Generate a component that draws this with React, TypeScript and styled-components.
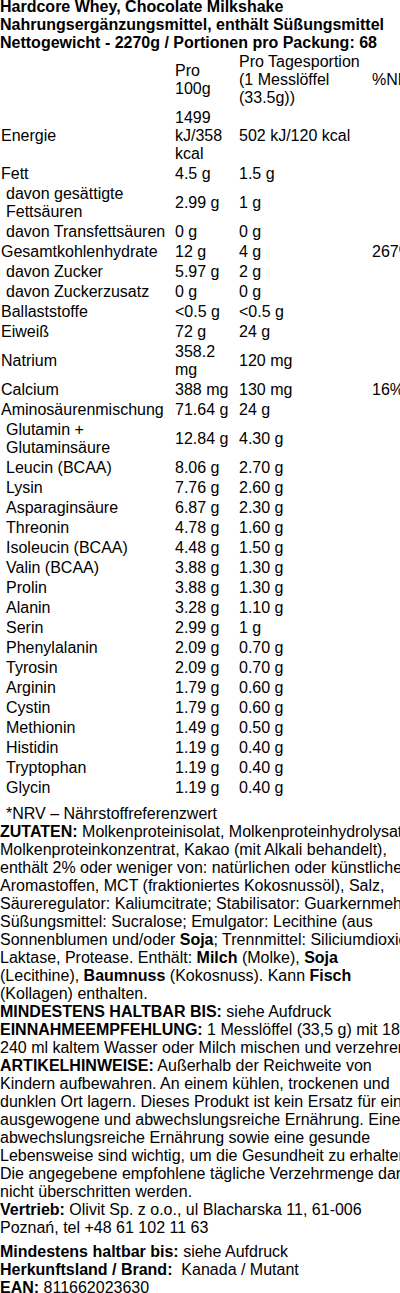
import styled, { createGlobalStyle } from "styled-components";

const Global = createGlobalStyle`
  html, body {
    margin: 0;
    padding: 0;
    overflow: hidden;
    background: #fff;
  }
  body {
    font-family: "Liberation Sans", Arial, sans-serif;
    font-size: 16px;
    color: #000;
  }
`;

const Page = styled.div`
  width: 420px;
  margin-top: -2px;
`;

const Heading = styled.div`
  font-weight: bold;
`;

const Table = styled.table`
  width: 100%;
  border-collapse: collapse;
  table-layout: fixed;
`;

const Cell = styled.td<{ $indent?: boolean }>`
  padding: 1px;
  padding-left: ${(p) => (p.$indent ? "6px" : "1px")};
  vertical-align: middle;
  text-align: left;
`;

const Note = styled.div`
  margin-top: 7px;
  padding-left: 6px;
`;

const Text = styled.div``;

const Footer = styled.div`
  margin-top: 6px;
`;

interface Row {
  name: string;
  per100: string;
  portion: string;
  nrv?: string;
  sub?: boolean;
}

const rows: Row[] = [
  { name: "Energie", per100: "1499 kJ/358 kcal", portion: "502 kJ/120 kcal" },
  { name: "Fett", per100: "4.5 g", portion: "1.5 g" },
  { name: "davon gesättigte Fettsäuren", per100: "2.99 g", portion: "1 g", sub: true },
  { name: "davon Transfettsäuren", per100: "0 g", portion: "0 g", sub: true },
  { name: "Gesamtkohlenhydrate", per100: "12 g", portion: "4 g", nrv: "267%" },
  { name: "davon Zucker", per100: "5.97 g", portion: "2 g", sub: true },
  { name: "davon Zuckerzusatz", per100: "0 g", portion: "0 g", sub: true },
  { name: "Ballaststoffe", per100: "<0.5 g", portion: "<0.5 g" },
  { name: "Eiweiß", per100: "72 g", portion: "24 g" },
  { name: "Natrium", per100: "358.2 mg", portion: "120 mg" },
  { name: "Calcium", per100: "388 mg", portion: "130 mg", nrv: "16%" },
  { name: "Aminosäurenmischung", per100: "71.64 g", portion: "24 g" },
  { name: "Glutamin + Glutaminsäure", per100: "12.84 g", portion: "4.30 g", sub: true },
  { name: "Leucin (BCAA)", per100: "8.06 g", portion: "2.70 g", sub: true },
  { name: "Lysin", per100: "7.76 g", portion: "2.60 g", sub: true },
  { name: "Asparaginsäure", per100: "6.87 g", portion: "2.30 g", sub: true },
  { name: "Threonin", per100: "4.78 g", portion: "1.60 g", sub: true },
  { name: "Isoleucin (BCAA)", per100: "4.48 g", portion: "1.50 g", sub: true },
  { name: "Valin (BCAA)", per100: "3.88 g", portion: "1.30 g", sub: true },
  { name: "Prolin", per100: "3.88 g", portion: "1.30 g", sub: true },
  { name: "Alanin", per100: "3.28 g", portion: "1.10 g", sub: true },
  { name: "Serin", per100: "2.99 g", portion: "1 g", sub: true },
  { name: "Phenylalanin", per100: "2.09 g", portion: "0.70 g", sub: true },
  { name: "Tyrosin", per100: "2.09 g", portion: "0.70 g", sub: true },
  { name: "Arginin", per100: "1.79 g", portion: "0.60 g", sub: true },
  { name: "Cystin", per100: "1.79 g", portion: "0.60 g", sub: true },
  { name: "Methionin", per100: "1.49 g", portion: "0.50 g", sub: true },
  { name: "Histidin", per100: "1.19 g", portion: "0.40 g", sub: true },
  { name: "Tryptophan", per100: "1.19 g", portion: "0.40 g", sub: true },
  { name: "Glycin", per100: "1.19 g", portion: "0.40 g", sub: true },
];

export default function App() {
  return (
    <Page>
      <Global />
      <Heading>
        Hardcore Whey, Chocolate Milkshake
        <br />
        Nahrungsergänzungsmittel, enthält Süßungsmittel
        <br />
        Nettogewicht - 2270g / Portionen pro Packung: 68
      </Heading>
      <Table>
        <colgroup>
          <col style={{ width: 174 }} />
          <col style={{ width: 64 }} />
          <col style={{ width: 133 }} />
          <col />
        </colgroup>
        <tbody>
          <tr>
            <Cell></Cell>
            <Cell>Pro 100g</Cell>
            <Cell>Pro Tagesportion (1 Messlöffel (33.5g))</Cell>
            <Cell>%NRV*</Cell>
          </tr>
          {rows.map((r) => (
            <tr key={r.name}>
              <Cell $indent={r.sub}>{r.name}</Cell>
              <Cell>{r.per100}</Cell>
              <Cell>{r.portion}</Cell>
              <Cell>{r.nrv}</Cell>
            </tr>
          ))}
        </tbody>
      </Table>
      <Note>*NRV – Nährstoffreferenzwert</Note>
      <Text>
        <b>ZUTATEN:</b> Molkenproteinisolat, Molkenproteinhydrolysat, Molkenproteinkonzentrat, Kakao (mit
        Alkali behandelt), enthält 2% oder weniger von: natürlichen oder künstlichen Aromastoffen, MCT
        (fraktioniertes Kokosnussöl), Salz, Säureregulator: Kaliumcitrate; Stabilisator: Guarkernmehl,
        Süßungsmittel: Sucralose; Emulgator: Lecithine (aus Sonnenblumen und/oder <b>Soja</b>; Trennmittel:
        Siliciumdioxid, Laktase, Protease. Enthält: <b>Milch</b> (Molke), <b>Soja</b> (Lecithine),{" "}
        <b>Baumnuss</b> (Kokosnuss). Kann <b>Fisch</b> (Kollagen) enthalten.
        <br />
        <b>MINDESTENS HALTBAR BIS:</b> siehe Aufdruck
        <br />
        <b>EINNAHMEEMPFEHLUNG:</b> 1 Messlöffel (33,5 g) mit 180-240 ml kaltem Wasser oder Milch mischen und
        verzehren.
        <br />
        <b>ARTIKELHINWEISE:</b> Außerhalb der Reichweite von Kindern aufbewahren. An einem kühlen, trockenen
        und dunklen Ort lagern. Dieses Produkt ist kein Ersatz für eine ausgewogene und abwechslungsreiche
        Ernährung. Eine abwechslungsreiche Ernährung sowie eine gesunde Lebensweise sind wichtig, um die
        Gesundheit zu erhalten. Die angegebene empfohlene tägliche Verzehrmenge darf nicht überschritten
        werden.
        <br />
        <b>Vertrieb:</b> Olivit Sp. z o.o., ul Blacharska 11, 61-006 Poznań, tel +48 61 102 11 63
      </Text>
      <Footer>
        <b>Mindestens haltbar bis:</b> siehe Aufdruck
        <br />
        <b>Herkunftsland / Brand:</b>&nbsp; Kanada / Mutant
        <br />
        <b>EAN:</b> 811662023630
      </Footer>
    </Page>
  );
}
